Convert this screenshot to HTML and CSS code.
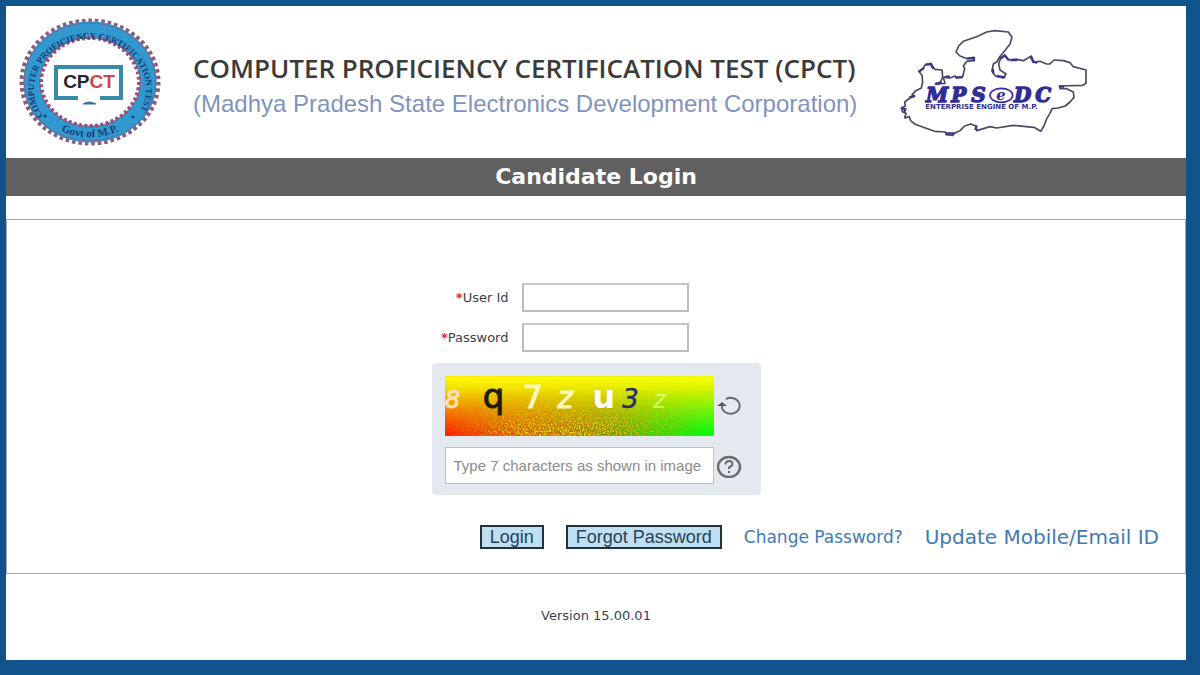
FILE: index.html
```html
<!DOCTYPE html>
<html lang="en">

<head>
    <meta charset="UTF-8">
    <meta name="viewport" content="width=device-width, initial-scale=1.0">
    <title>CPCT - Candidate Login</title>
    <link rel="stylesheet" href="styles.css">
</head>

<body>
    <div class="page">

        <!--Header-->

        <header class="header">
            <svg class="seal" viewBox="0 0 142 128" role="img" aria-label="CPCT seal">
                <defs>
                    <path id="sealTop" d="M 24 98 A 56 50 0 1 1 118 98" />
                    <path id="sealBottom" d="M 35 109 A 63 57 0 0 0 107 109" />
                </defs>
                <ellipse cx="71" cy="64" rx="68" ry="61" fill="none" stroke="#8d5a7c" stroke-width="5" pathLength="126" stroke-dasharray="1.1 0.9" />
                <ellipse cx="71" cy="64" rx="58" ry="52" fill="none" stroke="#3199d0" stroke-width="17" />
                <ellipse cx="71" cy="64" rx="66" ry="59" fill="none" stroke="#77658f" stroke-width="1" />
                <ellipse cx="71" cy="64" rx="49" ry="44" fill="none" stroke="#a14c70" stroke-width="4" pathLength="108" stroke-dasharray="1.1 0.9" />
                <text class="sealText"><textPath href="#sealTop">COMPUTER PROFICIENCY CERTIFICATION TEST</textPath></text>
                <text class="sealGovt" text-anchor="middle"><textPath href="#sealBottom" startOffset="50%">Govt of M.P.</textPath></text>
                <circle cx="26" cy="98" r="1.5" fill="#173e78" />
                <circle cx="114" cy="99" r="1.5" fill="#173e78" />
                <path d="M59 80H37V49H102V80H81" fill="none" stroke="#388ba6" stroke-width="4" />
                <path d="M64 86q6-4 13 0z" fill="#38709c" stroke="#38709c" />
                <text class="sealName" x="70" y="70" text-anchor="middle">CP<tspan fill="#cf4449">CT</tspan></text>
            </svg>

            <div class="titles">
                <h1>COMPUTER PROFICIENCY CERTIFICATION TEST (CPCT)</h1>
                <p>(Madhya Pradesh State Electronics Development Corporation)</p>
            </div>

            <svg class="map" viewBox="60 55 570 330" role="img" aria-label="MPSeDC">
                <path d="M166 226L195 224 190 206 205 202 210 208 225 202 230 208 248 204 250 196 254 180 250 172 260 158 282 156 280 146 262 150 240 142 228 130 236 112 250 98 290 84 320 70 345 66 385 70 396 86 390 106 376 124 358 146 350 160 340 166 336 188 346 202 370 208 378 196 360 184 356 166 362 148 374 140 386 154 410 152 430 156 454 142 462 160 480 158 500 166 510 166 522 154 550 156 570 162 580 174 618 184 618 224 608 230 538 232 540 240 560 240 580 250 582 266 570 280 556 292 534 298 516 300 510 314 500 330 492 352 482 368 462 356 400 350 350 358 330 354 290 366 288 352 272 346 254 352 240 366 226 372 218 380 198 378 196 370 164 368 130 356 104 346 92 336 88 324 74 328 78 314 68 310 64 298 76 292 74 280 90 268 104 262 96 258 108 246 124 238 128 220 126 200 116 188 130 180 134 170 152 164 164 182 186 184 188 206 180 222Z" fill="none" stroke="#4d4961" stroke-width="5" stroke-linejoin="round" />
                <path d="M64 298l12 4-4 10M88 266l16-4M118 188l14-10M136 168l16-2 8 14M166 226l20-4M196 206l14 0M226 206l22 0M262 150l20-2 0 8M338 180l2 14M350 202l26 4M362 150l12-10 12 14M392 154l20 0M452 144l8 16 12 2M538 234l14 0M286 364l4-14M198 374l24 0" fill="none" stroke="#35368f" stroke-width="7" />
                <text class="mapName" x="138 214 274" y="281">MPS</text>
                <text class="mapName" x="402 466" y="281">DC</text>
                <ellipse cx="364" cy="260" rx="34" ry="21" fill="none" stroke="#353095" stroke-width="5" />
                <text class="mapE" x="349" y="273">e</text>
                <text class="mapLine" x="136" y="302">ENTERPRISE ENGINE OF M.P.</text>
            </svg>
        </header>

        <h2 class="bar">Candidate Login</h2>

        <!--Login form-->

        <main>
            <form class="login">
                <div class="fields">
                    <label for="userId"><span>*</span>User Id</label>
                    <input type="text" id="userId">
                    <label for="password"><span>*</span>Password</label>
                    <input type="password" id="password">
                </div>

                <div class="captcha">
                    <svg class="captchaImage" viewBox="0 0 270 60" role="img" aria-label="Captcha image">
                        <defs>
                            <linearGradient id="across">
                                <stop offset="0" stop-color="#ff1800" />
                                <stop offset="0.3" stop-color="#d85800" />
                                <stop offset="0.6" stop-color="#7c8c00" />
                                <stop offset="0.8" stop-color="#28d808" />
                                <stop offset="1" stop-color="#00ff10" />
                            </linearGradient>
                            <linearGradient id="down" x2="0" y2="1">
                                <stop offset="0" stop-color="#ffff00" />
                                <stop offset="0.2" stop-color="#f4f400" stop-opacity="0.9" />
                                <stop offset="1" stop-color="#e0e000" stop-opacity="0" />
                            </linearGradient>
                            <linearGradient id="fadeX">
                                <stop offset="0" stop-color="#fff" stop-opacity="0" />
                                <stop offset="0.3" stop-color="#fff" />
                                <stop offset="0.6" stop-color="#fff" />
                                <stop offset="0.95" stop-color="#fff" stop-opacity="0" />
                            </linearGradient>
                            <linearGradient id="fadeY" x2="0" y2="1">
                                <stop offset="0.2" stop-color="#000" />
                                <stop offset="0.9" stop-color="#000" stop-opacity="0" />
                            </linearGradient>
                            <mask id="speckleArea">
                                <rect width="270" height="60" fill="url(#fadeX)" />
                                <rect width="270" height="60" fill="url(#fadeY)" />
                            </mask>
                            <filter id="speckle" x="0" y="0" width="1" height="1">
                                <feTurbulence type="fractalNoise" baseFrequency="0.6" numOctaves="2" seed="4" />
                                <feColorMatrix values="1.6 0 0 0 -0.2  0 1.4 0 0 -0.2  0 0 0 0 0  7 0 0 0 -3.1" />
                            </filter>
                        </defs>
                        <rect width="270" height="60" fill="url(#across)" />
                        <rect width="270" height="60" fill="url(#down)" />
                        <g mask="url(#speckleArea)">
                            <rect width="270" height="60" filter="url(#speckle)" />
                        </g>
                        <g class="captchaText">
                            <text x="0" y="32" font-size="24" font-style="italic" fill="#ffe0b0" stroke="#ffe0b0">8</text>
                            <text x="38" y="32" font-size="34" fill="#211c08" stroke="#211c08">q</text>
                            <text x="78" y="32" font-size="32" fill="#fff7c0" stroke="#fff7c0">7</text>
                            <text x="113" y="32" font-size="30" font-style="italic" fill="#fff8b8" stroke="#fff8b8">z</text>
                            <text x="148" y="32" font-size="32" font-weight="bold" fill="#fff">u</text>
                            <text x="178" y="32" font-size="26" font-style="italic" fill="#27306a" stroke="#27306a" stroke-width="0.5">3</text>
                            <text x="209" y="32" font-size="24" font-style="italic" fill="#d7ff67">z</text>
                        </g>
                    </svg>
                    <button type="button" class="iconButton" aria-label="Refresh image">
                        <svg viewBox="0 0 26 24">
                            <path d="M9 5A9 8 0 1 1 8 18" fill="none" stroke="#696d72" stroke-width="2" />
                            <path d="M5 11v3q1 3 3 4" fill="none" stroke="#696d72" stroke-width="2" />
                            <path d="M0 12l5-4 5 4z" fill="#55595e" />
                        </svg>
                    </button>
                    <input type="text" class="captchaInput" aria-label="Captcha" placeholder="Type 7 characters as shown in image">
                    <button type="button" class="iconButton" aria-label="Help">
                        <svg viewBox="0 0 26 24">
                            <ellipse cx="12" cy="13" rx="11" ry="10" fill="none" stroke="#6a6c70" stroke-width="2.5" />
                            <path d="M8.500 10.500q0-3.500 3.500-3.500t3.500 3q0 1.500-2 2.500t-1.500 2.500" fill="none" stroke="#6a6c70" stroke-width="2" />
                            <rect x="11" y="17" width="2" height="2" fill="#6a6c70" />
                        </svg>
                    </button>
                </div>

                <div class="actions">
                    <button type="submit">Login</button>
                    <button type="button">Forgot Password</button>
                    <a href="#" class="changeLink">Change Password?</a>
                    <a href="#" class="updateLink">Update Mobile/Email ID</a>
                </div>
            </form>
        </main>

        <footer>Version 15.00.01</footer>
    </div>
</body>

</html>
```

FILE: styles.css
```css
* {
    box-sizing: border-box;
}

body {
    margin: 0;
    min-height: 100vh;
    display: flex;
    padding: 6px 14px 15px 6px;
    background-color: #0f538a;
    font-family: "DejaVu Sans", Verdana, sans-serif;
    color: #3c3f4c;
}

.page {
    flex: 1;
    background-color: white;
}

.header {
    display: flex;
    align-items: center;
    height: 152px;
    padding: 0 13px;
}

.seal {
    width: 142px;
    height: 128px;
    flex-shrink: 0;
}

.sealText {
    font: bold 9px "Liberation Serif", serif;
    fill: #173e78;
}

.sealGovt {
    font: bold 11px "Liberation Serif", serif;
    fill: #173e78;
}

.sealName {
    font: bold 19px "Liberation Sans", sans-serif;
    fill: #26252b;
}

.titles {
    width: 677px;
    margin-left: 32px;
    padding-top: 8px;
    white-space: nowrap;
}

.titles h1 {
    margin: 0;
    font: 600 26px/36px "Open Sans", sans-serif;
    color: #3b3b3b;
}

.titles p {
    margin: 0;
    font: 24px/36px "Liberation Sans", sans-serif;
    color: #8193bd;
}

.map {
    width: 190px;
    height: 110px;
    margin-left: 30px;
    flex-shrink: 0;
}

.mapName {
    font: italic bold 60px "DejaVu Serif", serif;
    fill: #302d94;
    stroke: #302d94;
    stroke-width: 4px;
}

.mapE {
    font: italic bold 44px "DejaVu Serif", serif;
    fill: #302d94;
}

.mapLine {
    font: bold 21px "DejaVu Sans", sans-serif;
    fill: #302d94;
}

.bar {
    margin: 0;
    background-color: #606060;
    color: white;
    font-size: 22px;
    line-height: 38px;
    text-align: center;
}

main {
    margin-top: 23px;
    border: 1px solid #a9a9a9;
    padding: 63px 26px 24px;
}

.login {
    display: flex;
    flex-direction: column;
    align-items: center;
}

.fields {
    display: grid;
    grid-template-columns: 77px 167px;
    column-gap: 13px;
    row-gap: 11px;
    width: 329px;
    align-items: center;
    font-size: 13px;
}

.fields label {
    text-align: right;
    white-space: nowrap;
}

.fields label span {
    color: #e8252d;
    font-weight: bold;
}

.fields input {
    width: 100%;
    height: 29px;
    border: 2px solid #bdbdbd;
    border-top-color: #c6c6c6;
    background-color: white;
}

.captcha {
    display: grid;
    grid-template-columns: 269px 26px;
    column-gap: 3px;
    row-gap: 11px;
    align-items: center;
    width: 329px;
    margin-top: 11px;
    padding: 13px 13px 11px;
    border-radius: 4px;
    background-color: #e4e9ef;
}

.captchaImage {
    display: block;
    width: 100%;
    height: 60px;
}

.captchaText {
    font-family: "DejaVu Sans", sans-serif;
}

.captchaInput {
    width: 100%;
    height: 37px;
    padding: 0 8px;
    border: 1px solid #b5c1cb;
    background-color: white;
    font: 15px "Liberation Sans", sans-serif;
}

.captchaInput::placeholder {
    color: #8b8b8b;
}

.iconButton {
    width: 26px;
    height: 24px;
    padding: 0;
    border: none;
    background: none;
}

.iconButton svg {
    display: block;
}

.actions {
    display: flex;
    align-items: center;
    align-self: flex-end;
    gap: 22px;
    margin-top: 30px;
    white-space: nowrap;
}

.actions button {
    height: 24px;
    padding: 0 8px;
    border: 2px solid #22333b;
    background-color: #bee0f2;
    color: #2b3f55;
    font: 18px/20px "Liberation Sans", sans-serif;
}

.actions a {
    text-decoration: none;
    color: #4279b6;
}

.changeLink {
    font-size: 17px;
}

.updateLink {
    font-size: 20px;
}

footer {
    padding: 34px 0;
    font-size: 13px;
    text-align: center;
}
```
